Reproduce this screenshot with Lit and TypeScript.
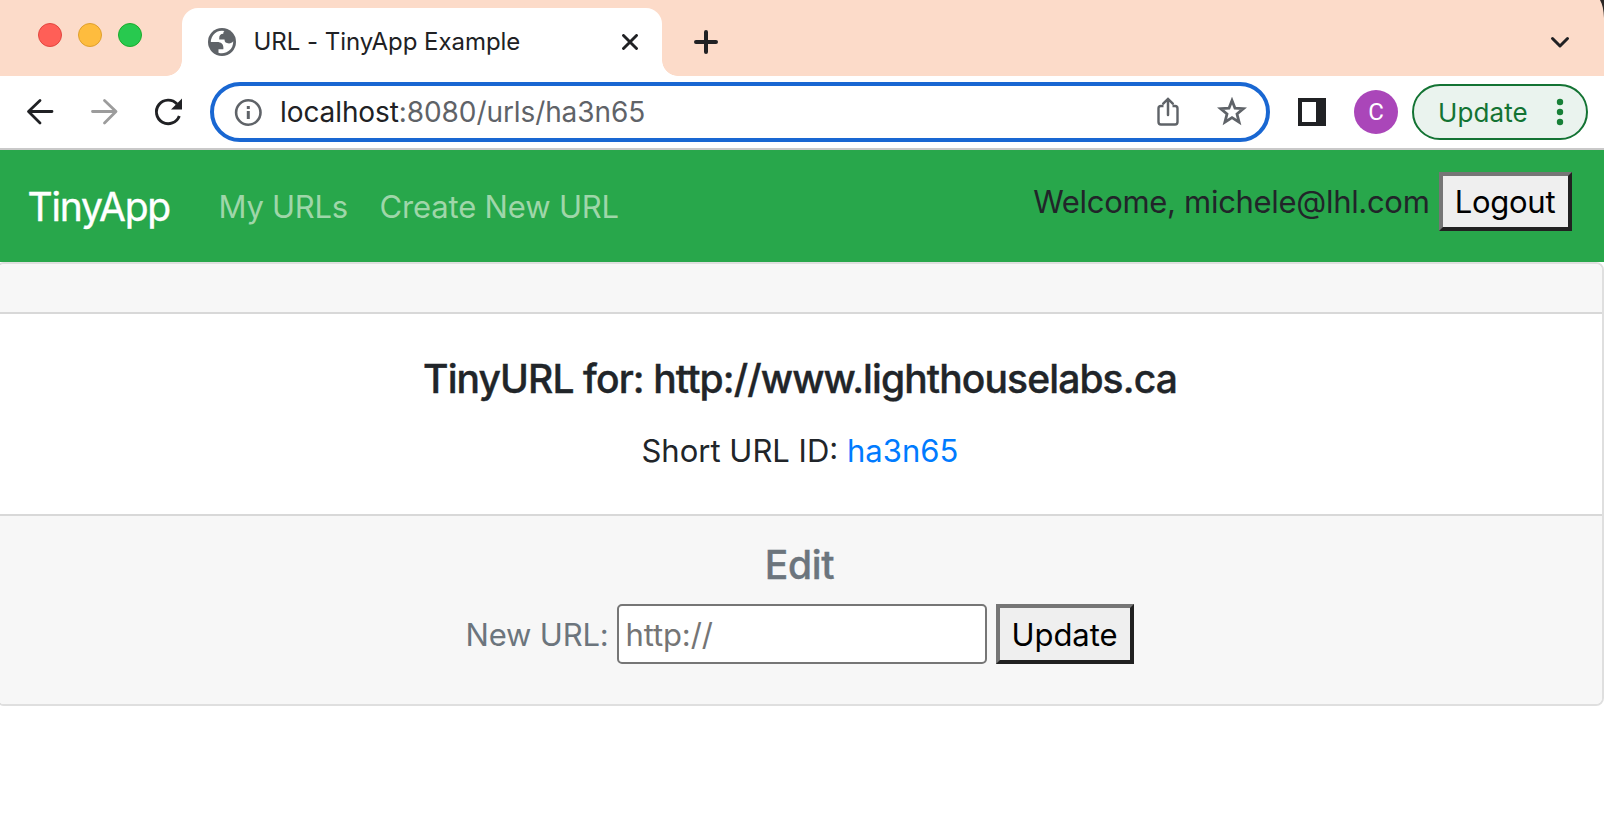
import { LitElement, html, css } from "lit";
import { customElement, property } from "lit/decorators.js";

@customElement("browser-tabs")
class BrowserTabs extends LitElement {
  @property() label = "";

  static styles = css`
    :host { display: block; }
    .strip { display: flex; height: 76px; background: #fcdbc9; position: relative; overflow: hidden; }
    .lights { display: flex; gap: 16px; padding: 23px 0 0 38px; width: 144px; box-sizing: border-box; flex: none; }
    .light { width: 24px; height: 24px; border-radius: 50%; box-sizing: border-box; flex: none; }
    .close { background: #ff5f57; border: 1px solid #e2463f; }
    .min { background: #febc3e; border: 1px solid #dfa02e; }
    .max { background: #28c94f; border: 1px solid #1bac2c; }
    .tab { position: relative; margin: 8px 0 0 38px; width: 480px; height: 68px; box-sizing: border-box; background: #fff;
      border-radius: 16px 16px 0 0; display: flex; align-items: center; padding: 0 24px 0 26px; flex: none; }
    .tab::before, .tab::after { content: ""; position: absolute; bottom: 0; width: 16px; height: 16px; }
    .tab::before { left: -16px; background: radial-gradient(circle at 0 0, transparent 15.5px, #fff 16.2px); }
    .tab::after { right: -16px; background: radial-gradient(circle at 100% 0, transparent 15.5px, #fff 16.2px); }
    .title { font: 400 24px/30px Inter, sans-serif; letter-spacing: -0.04px; color: #202124; margin: -1px 0 0 17.5px; flex: 1; white-space: nowrap; }
    svg { display: block; flex: none; }
    .plus { margin: 30px 0 0 32px; }
    .chev { margin: 34px 32px 0 auto; }
    .corner { position: absolute; right: 0; top: 0; }
  `;

  render() {
    return html`<div class="strip">
      <div class="lights"><span class="light close"></span><span class="light min"></span><span class="light max"></span></div>
      <div class="tab">
        <svg width="28" height="28" viewBox="2 2 20 20">
          <circle cx="12" cy="12" r="10" fill="#5f6368"/>
          <path fill="#fff" d="M4 12h4.400c3.407.022 4.922 1.730 4.543 5.127H9.488v2.470a8.004 8.004 0 0 0 10.498-8.080C19.327 12.504 18.332 13 17 13c-2.137 0-3.206-.916-3.206-2.750h-3.748c-.274-2.728.683-4.092 2.870-4.092 0-.975.327-1.597.811-1.970A8.004 8.004 0 0 0 4 12z"/>
        </svg>
        <span class="title">${this.label}</span>
        <svg width="16" height="16" viewBox="0 0 16 16"><path d="M1.500 1.500l13 13M14.500 1.500l-13 13" stroke="#202124" stroke-width="2.900" stroke-linecap="round"/></svg>
      </div>
      <svg class="plus" width="24" height="24" viewBox="0 0 24 24"><path d="M12 2v20M2 12h20" stroke="#202124" stroke-width="4" stroke-linecap="round"/></svg>
      <svg class="chev" width="24" height="16" viewBox="0 0 24 16"><path d="M4.500 4.500l7.500 7.500 7.500-7.500" fill="none" stroke="#202124" stroke-width="3" stroke-linecap="round" stroke-linejoin="round"/></svg>
      <svg class="corner" width="6" height="18" viewBox="0 0 6 18"><path d="M2 0H6V18C5.700 10 4.500 4 2 0Z" fill="#2b2625"/></svg>
    </div>`;
  }
}

@customElement("browser-toolbar")
class BrowserToolbar extends LitElement {
  static styles = css`
    :host { display: block; }
    .bar { display: flex; align-items: center; height: 74px; box-sizing: border-box; border-bottom: 2px solid #c9c9c9; background: #fff; padding: 0 16px 0 24px; }
    svg { display: block; flex: none; }
    .fwd, .reload { margin-left: 32px; }
    .omni { display: flex; align-items: center; width: 1060px; height: 60px; box-sizing: border-box; border: 4px solid #1967d2; border-radius: 30px; margin-left: 26px; padding: 0 19px 0 20px; flex: none; }
    .url { font: 400 28px/36px Inter, sans-serif; letter-spacing: -0.09px; color: #5f6368; margin-left: 18px; flex: 1; white-space: nowrap; }
    .host { color: #202124; }
    .star { margin-left: 37px; }
    .panel { margin-left: 28px; }
    .avatar { width: 44px; height: 44px; border-radius: 50%; background: #aa46b9; color: #fff; font: 400 24px/44px Roboto, sans-serif; text-align: center; margin-left: 28px; flex: none; }
    .chip { display: flex; align-items: center; width: 176px; height: 56px; box-sizing: border-box; border: 2px solid #137333; border-radius: 28px; background: #eaf3ee; margin-left: 14px; padding: 0 21px 0 24px; justify-content: space-between; color: #137333; font: 400 26px/34px Inter, sans-serif; letter-spacing: 0.1px; flex: none; }
    .chip span { margin-top: 1px; }
  `;

  render() {
    return html`<div class="bar">
      <svg width="32" height="32" viewBox="0 0 32 32"><path d="M16 4.500L4.500 15.500L16 27M5 15.500H28" fill="none" stroke="#202124" stroke-width="2.800" stroke-linecap="round" stroke-linejoin="round"/></svg>
      <svg class="fwd" width="32" height="32" viewBox="0 0 32 32"><path d="M16.500 4.500L28 15.500L16.500 27M27.500 15.500H4.500" fill="none" stroke="#9c9c9c" stroke-width="2.800" stroke-linecap="round" stroke-linejoin="round"/></svg>
      <svg class="reload" width="32" height="32" viewBox="0 0 32 32"><path d="M27.300 20A11.800 11.800 0 1 1 25 8" fill="none" stroke="#202124" stroke-width="2.900"/><path d="M30 2.500V13.500H19Z" fill="#202124"/></svg>
      <div class="omni">
        <svg width="28" height="28" viewBox="0 0 28 28"><circle cx="14.300" cy="14.500" r="12.200" fill="none" stroke="#5f6368" stroke-width="2.600"/><path d="M12.800 13h3v8h-3zM12.800 8h3v3h-3z" fill="#5f6368"/></svg>
        <span class="url"><span class="host">localhost</span>:8080/urls/ha3n65</span>
        <svg width="24" height="32" viewBox="0 0 24 32"><path d="M7.500 10H5Q2.500 10 2.500 12.500V26Q2.500 28.500 5 28.500H19Q21.500 28.500 21.500 26V12.500Q21.500 10 19 10H16.500" fill="none" stroke="#5f6368" stroke-width="2.400"/><path d="M12 19V4M7.200 7.700L12 2.900l4.800 4.800" fill="none" stroke="#5f6368" stroke-width="2.500" stroke-linecap="round"/></svg>
        <svg class="star" width="30" height="30" viewBox="0 0 30 30"><path d="M15 3.500L18 11.200L26.400 11.700L20 17L22.100 25.200L15 20.600L7.900 25.200L10 17L3.600 11.700L12 11.200Z" fill="none" stroke="#5f6368" stroke-width="2.800"/></svg>
      </div>
      <svg class="panel" width="28" height="28" viewBox="0 0 28 28"><path fill="#202124" fill-rule="evenodd" d="M0 0H28V28H0ZM4 4V24H18V4Z"/></svg>
      <div class="avatar">C</div>
      <div class="chip"><span>Update</span><svg width="10" height="28" viewBox="0 0 10 28"><g fill="#188038"><circle cx="5" cy="4" r="3.200"/><circle cx="5" cy="14" r="3.200"/><circle cx="5" cy="24" r="3.200"/></g></svg></div>
    </div>`;
  }
}

@customElement("url-page")
class UrlPage extends LitElement {
  @property() email = "";
  @property() longUrl = "";
  @property() shortId = "";

  static styles = css`
    :host { display: block; font: 400 31px/48px Inter, sans-serif; color: #212529; }
    a { text-decoration: none; }
    nav { display: flex; height: 112px; background: #28a74b; white-space: nowrap; box-sizing: border-box; padding: 0 32px 0 27.6px; }
    .brand { color: #fff; font-size: 39px; letter-spacing: -1.23px; width: 191px; margin-top: 33px; -webkit-text-stroke: 0.4px currentColor; }
    .link { color: #9fd6a9; margin-top: 33px; width: 161px; letter-spacing: -0.28px; }
    .create { letter-spacing: -0.17px; width: auto; }
    .welcome { margin: 28px 9.5px 0 auto; letter-spacing: -0.31px; }
    button, input { font: inherit; box-sizing: border-box; margin: 0; height: 60px; }
    button { background: #efefef; color: #000; border: 4px solid; border-color: #767676 #212121 #212121 #767676; padding: 0 1px 0 0; line-height: 48px; border-radius: 0; }
    .logout { width: 133px; height: 59px; margin-top: 22px; letter-spacing: -0.26px; }
    .card { display: flex; flex-direction: column; margin-left: -4px; height: 444px; box-sizing: border-box; border: 2px solid #dfdfdf; border-radius: 8px; overflow: hidden; text-align: center; }
    .head { height: 50px; box-sizing: border-box; background: #f7f7f7; border-bottom: 2px solid #d8d8d8; }
    .body { height: 200px; padding: 41px 0 0 0; box-sizing: border-box; }
    h5 { font-size: 39px; font-weight: 500; line-height: 48px; letter-spacing: -0.89px; margin: 0; -webkit-text-stroke: 0.4px currentColor; }
    .short { margin: 24px 0 0; letter-spacing: 0; }
    .short a { color: #007bff; letter-spacing: 0.05px; }
    .foot { flex: 1; background: #f7f7f7; border-top: 2px solid #d8d8d8; color: #6c757d; padding: 25px 1px 0 0; }
    .foot h5 { letter-spacing: -0.3px; }
    form { display: flex; align-items: center; justify-content: center; margin-top: 15px; height: 60px; }
    label { letter-spacing: -0.18px; margin: 2px 8px 0 0; }
    input { width: 370px; border: 2px solid #767676; border-radius: 5px; background: #fff; padding: 2px 7px; letter-spacing: -0.12px; margin-right: 9px; }
    input::placeholder { color: #757575; opacity: 1; }
    .update { width: 138px; letter-spacing: -0.1px; padding: 2px 0 0 0; }
  `;

  render() {
    return html`
      <nav>
        <a class="brand">TinyApp</a>
        <a class="link">My URLs</a>
        <a class="link create">Create New URL</a>
        <span class="welcome">Welcome, ${this.email}</span>
        <button class="logout">Logout</button>
      </nav>
      <section class="card">
        <div class="head"></div>
        <div class="body">
          <h5>TinyURL for: ${this.longUrl}</h5>
          <p class="short">Short URL ID: <a>${this.shortId}</a></p>
        </div>
        <div class="foot">
          <h5>Edit</h5>
          <form>
            <label>New URL:</label>
            <input type="text" placeholder="http://" />
            <button class="update" type="button">Update</button>
          </form>
        </div>
      </section>`;
  }
}

@customElement("app-root")
class AppRoot extends LitElement {
  static styles = css`:host { display: block; width: 100%; height: 814px; background: #fff; overflow: hidden; }`;

  render() {
    return html`
      <browser-tabs label="URL - TinyApp Example"></browser-tabs>
      <browser-toolbar></browser-toolbar>
      <url-page email="michele@lhl.com" longUrl="http://www.lighthouselabs.ca" shortId="ha3n65"></url-page>`;
  }
}
